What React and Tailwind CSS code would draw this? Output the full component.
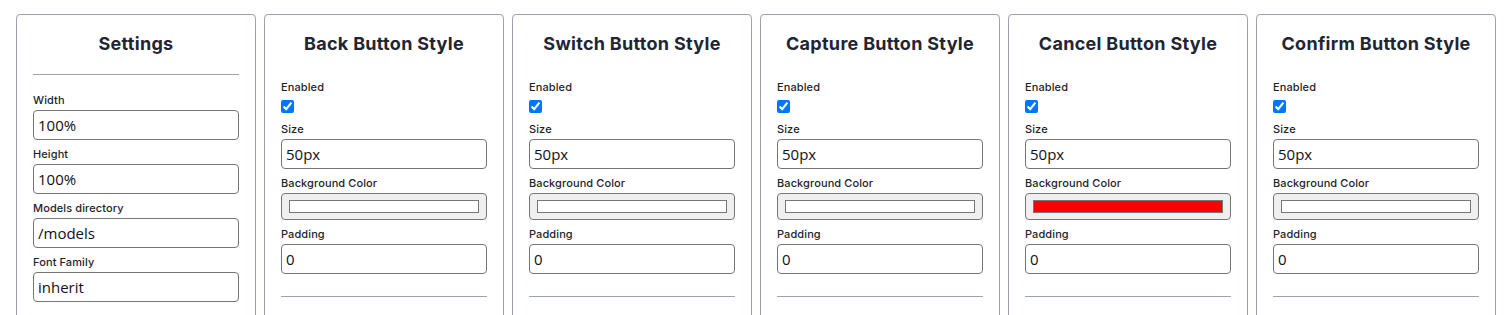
import { useState } from 'react';

const buttonCards = [
  { title: 'Back Button Style', color: '#ffffff' },
  { title: 'Switch Button Style', color: '#ffffff' },
  { title: 'Capture Button Style', color: '#ffffff' },
  { title: 'Cancel Button Style', color: '#ff0000' },
  { title: 'Confirm Button Style', color: '#ffffff' },
];

const settingsFields = [
  { label: 'Width', value: '100%' },
  { label: 'Height', value: '100%' },
  { label: 'Models directory', value: '/models' },
  { label: 'Font Family', value: 'inherit' },
];

function Label({ children, className = '' }) {
  return (
    <label className={`block text-[11px] font-medium leading-4 tracking-[0.1px] text-[#1c1f2b] ${className}`}>{children}</label>
  );
}

function TextInput({ value }) {
  const [val, setVal] = useState(value);
  return (
    <input
      type="text"
      value={val}
      onChange={(e) => setVal(e.target.value)}
      className="mt-[2px] block h-[30px] w-full rounded-[4px] border border-[#767676] bg-white px-1 font-['Open_Sans',sans-serif] text-[15px] text-[#111] outline-none"
    />
  );
}

function ColorField({ color }) {
  return (
    <div className="mt-[2px] flex h-[27px] w-full items-center rounded-[4px] border border-[#767676] bg-[#efefef] px-[7px]">
      <div className="h-[13px] w-full border border-[#767676]" style={{ backgroundColor: color }} />
    </div>
  );
}

function Card({ children }) {
  return (
    <div className="h-[420px] rounded-[4px] border border-[#9ca3af] px-4 pt-[15px]">
      {children}
    </div>
  );
}

function Heading({ children }) {
  return (
    <h2 className="text-center text-[18px] font-bold leading-7 tracking-[0.3px] text-[#1f2533]">{children}</h2>
  );
}

export default function App() {
  return (
    <div className="h-[315px] overflow-hidden bg-white font-['Inter',sans-serif]">
      <div className="grid grid-cols-6 gap-2 px-4 pt-[14px]">
        <Card>
          <Heading>Settings</Heading>
          <hr className="mt-4 border-t border-[#9ca3af]" />
          <div className="mt-[17px]">
            {settingsFields.map((f, i) => (
              <div key={f.label} className={i > 0 ? 'mt-[6px]' : ''}>
                <Label>{f.label}</Label>
                <TextInput value={f.value} />
              </div>
            ))}
          </div>
        </Card>
        {buttonCards.map((card) => (
          <Card key={card.title}>
            <Heading>{card.title}</Heading>
            <Label className="mt-[21px]">Enabled</Label>
            <input type="checkbox" defaultChecked className="mt-[5px] block h-[13px] w-[13px]" />
            <Label className="mt-[8px]">Size</Label>
            <TextInput value="50px" />
            <Label className="mt-[6px]">Background Color</Label>
            <ColorField color={card.color} />
            <Label className="mt-[6px]">Padding</Label>
            <TextInput value="0" />
            <hr className="mt-[22px] border-t border-[#9ca3af]" />
          </Card>
        ))}
      </div>
    </div>
  );
}
